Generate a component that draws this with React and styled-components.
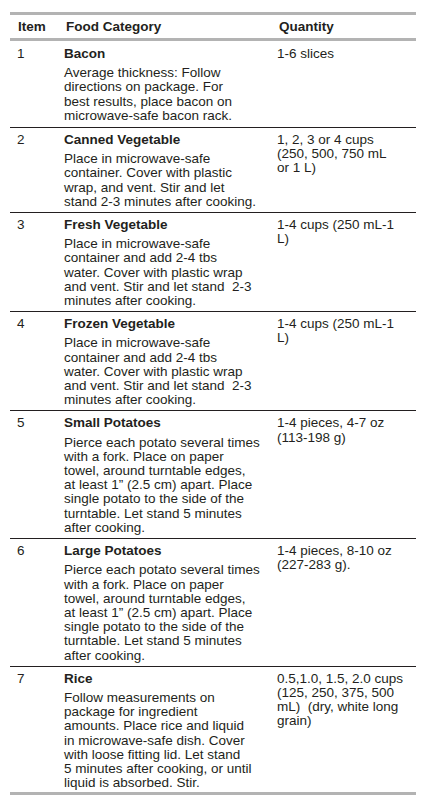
import React from 'react'
import styled, { createGlobalStyle } from 'styled-components'

const GlobalStyle = createGlobalStyle`
  html, body {
    margin: 0;
    padding: 0;
    background: #ffffff;
  }
  body {
    font-family: "Liberation Sans", Arial, Helvetica, sans-serif;
    color: #231f20;
  }
`

const foods = [
    {
        id: 1,
        title: 'Bacon',
        text: [
            'Average thickness: Follow',
            'directions on package. For',
            'best results, place bacon on',
            'microwave-safe bacon rack.',
        ],
        qty: ['1-6 slices'],
    },
    {
        id: 2,
        title: 'Canned Vegetable',
        text: [
            'Place in microwave-safe',
            'container. Cover with plastic',
            'wrap, and vent. Stir and let',
            'stand 2-3 minutes after cooking.',
        ],
        qty: ['1, 2, 3 or 4 cups', '(250, 500, 750 mL', 'or 1 L)'],
    },
    {
        id: 3,
        title: 'Fresh Vegetable',
        text: [
            'Place in microwave-safe',
            'container and add 2-4 tbs',
            'water. Cover with plastic wrap',
            'and vent. Stir and let stand\u00a0 2-3',
            'minutes after cooking.',
        ],
        qty: ['1-4 cups (250 mL-1', 'L)'],
    },
    {
        id: 4,
        title: 'Frozen Vegetable',
        text: [
            'Place in microwave-safe',
            'container and add 2-4 tbs',
            'water. Cover with plastic wrap',
            'and vent. Stir and let stand\u00a0 2-3',
            'minutes after cooking.',
        ],
        qty: ['1-4 cups (250 mL-1', 'L)'],
    },
    {
        id: 5,
        title: 'Small Potatoes',
        text: [
            'Pierce each potato several times',
            'with a fork. Place on paper',
            'towel, around turntable edges,',
            'at least 1\u201d (2.5 cm) apart. Place',
            'single potato to the side of the',
            'turntable. Let stand 5 minutes',
            'after cooking.',
        ],
        qty: ['1-4 pieces, 4-7 oz', '(113-198 g)'],
    },
    {
        id: 6,
        title: 'Large Potatoes',
        text: [
            'Pierce each potato several times',
            'with a fork. Place on paper',
            'towel, around turntable edges,',
            'at least 1\u201d (2.5 cm) apart. Place',
            'single potato to the side of the',
            'turntable. Let stand 5 minutes',
            'after cooking.',
        ],
        qty: ['1-4 pieces, 8-10 oz', '(227-283 g).'],
    },
    {
        id: 7,
        title: 'Rice',
        text: [
            'Follow measurements on',
            'package for ingredient',
            'amounts. Place rice and liquid',
            'in microwave-safe dish. Cover',
            'with loose fitting lid. Let stand',
            '5 minutes after cooking, or until',
            'liquid is absorbed. Stir.',
        ],
        qty: ['0.5,1.0, 1.5, 2.0 cups', '(125, 250, 375, 500', 'mL)\u00a0 (dry, white long', 'grain)'],
    },
]

const Table = styled.div`
  width: 406px;
  margin: 12px 0 0 10px;
  border-top: 3px solid #b3b3b3;
  border-bottom: 3px solid #b3b3b3;
`

const Row = styled.div`
  display: grid;
  grid-template-columns: 54px 213px 1fr;
  padding-top: ${p => (p.$first ? 6 : 5)}px;
  padding-bottom: ${p => (p.$first ? 4 : p.$last ? 2 : 3)}px;
  border-bottom: ${p => (p.$last ? 'none' : '1px solid #231f20')};
`

const HeaderRow = styled.div`
  display: grid;
  grid-template-columns: 54px 213px 1fr;
  height: 23px;
  align-items: center;
  border-bottom: 3px solid #b3b3b3;
  font-weight: 700;
  font-size: 13.5px;
`

const HeadCell = styled.div`
  padding-left: ${p => p.$pad || 0}px;
`

const Cell = styled.div`
  font-size: 13.5px;
  line-height: 14.2px;
  padding-left: ${p => p.$pad || 0}px;
`

const Title = styled.div`
  font-weight: 700;
  margin-bottom: 5px;
`

const Line = styled.div`
  white-space: nowrap;
`

const App = () => {
    return (
        <>
            <GlobalStyle />
            <Table>
                <HeaderRow>
                    <HeadCell $pad={8}>Item</HeadCell>
                    <HeadCell $pad={2}>Food Category</HeadCell>
                    <HeadCell $pad={2}>Quantity</HeadCell>
                </HeaderRow>
                {foods.map((food, index) => (
                    <Row key={food.id} $first={index === 0} $last={index === foods.length - 1}>
                        <Cell $pad={7}>{food.id}</Cell>
                        <Cell>
                            <Title>{food.title}</Title>
                            {food.text.map((line, i) => (
                                <Line key={i}>{line}</Line>
                            ))}
                        </Cell>
                        <Cell>
                            {food.qty.map((line, i) => (
                                <Line key={i}>{line}</Line>
                            ))}
                        </Cell>
                    </Row>
                ))}
            </Table>
        </>
    )
}

export default App
